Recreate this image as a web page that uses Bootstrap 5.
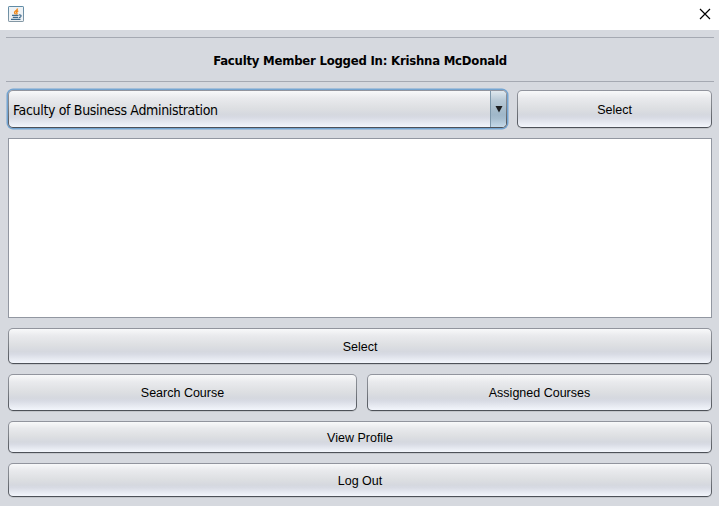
<!DOCTYPE html>
<html lang="en">
<head>
<meta charset="utf-8">
<meta name="viewport" content="width=device-width, initial-scale=1">
<title>Faculty Member</title>
<link href="https://cdn.jsdelivr.net/npm/bootstrap@5.3.0/dist/css/bootstrap.min.css" rel="stylesheet">
<style>
body{background:#d6d9df;font-family:"Liberation Sans",Arial,sans-serif;font-size:13px;color:#000;height:506px}
.title-strip{height:30px;background:#fff;padding:6px 8px 0}
.title-strip .close-x{margin:2px 0 0;width:12px;height:12px}
.user-strip{margin:7px 5px 0 6px;height:45px;border-top:1px solid #a5a9b2;border-bottom:1px solid #a5a9b2;font:bold 13px/43px "DejaVu Sans Condensed","DejaVu Sans",sans-serif;font-stretch:condensed;padding-top:1px}
.user-strip span{letter-spacing:-.22px;white-space:nowrap}
.main-area{padding:8px 7px 0 8px}
.nim{border:1px solid transparent;border-radius:5px;padding:3px 0 0;font-size:12.5px;line-height:15px;color:#000;
background:linear-gradient(#f8f9fa 0,#e9eaed 20%,#dddfe2 48%,#d5d8df 66%,#d8dbe4 74%,#f3f6fc 100%) padding-box,linear-gradient(#92959e,#81858b 40%,#4c5057) border-box;
box-shadow:0 1px 0 #c3c6cb}
.nim:hover,.nim:active{color:#000!important;border-color:transparent!important}
.combo{width:499px;height:38px;box-shadow:0 0 0 1.5px #73a4d1;font:14px/18px "DejaVu Sans Condensed","DejaVu Sans",sans-serif;font-stretch:condensed;padding:0;overflow:hidden}
.combo .combo-text{padding-left:4px;padding-top:1px;letter-spacing:-.34px;white-space:nowrap}
.combo .arrow-part{width:16px;border-left:1px solid #7c97ab;background:linear-gradient(#dfe8ee 0,#b9cad7 25%,#a8bdcc 50%,#9fb7c9 66%,#a6bdcf 76%,#c4d9e9 100%);border-radius:0 4px 4px 0}
.list-box{height:180px;background:#fff;border:1px solid #9297a1;margin-top:10px}
.h36{height:36px}.h37{height:37px;padding-top:2px}.h32{height:32px}.h34{height:34px}.h38{height:38px}
.w-search{width:349px}
.g10{gap:10px}
.actions{padding-top:10px}
</style>
</head>
<body>
<header class="title-strip d-flex justify-content-between align-items-start">
<svg width="16" height="16" viewBox="0 0 16 16" aria-hidden="true">
<defs><linearGradient id="jb" x2="0" y2="1"><stop stop-color="#5f8ba6"/><stop offset="1" stop-color="#8397a4"/></linearGradient></defs>
<rect x=".5" y=".5" width="15" height="15" rx=".6" fill="#eef2f5" stroke="url(#jb)"/>
<path d="M9.500 2.500Q9.500 4 7.500 5.200Q5.600 6.500 7.600 8.300M10.300 4.800Q7.800 5.800 8.900 7Q9.400 7.700 8.400 8.600" fill="none" stroke="#f08a1d" stroke-width="1.400"/>
<path d="M4 9.400H10.500M4.800 11.300H10M11 9Q13.600 8.700 13 10.200Q12.500 11.300 10.800 11.600M3 13.400H12.500" fill="none" stroke="#426c8d" stroke-width="1.200"/>
</svg>
<svg class="close-x" width="12" height="12" viewBox="0 0 12 12" role="img" aria-label="Close"><path d="M1 1L11 11M11 1L1 11" stroke="#000" stroke-width="1.200" fill="none"/></svg>
</header>
<div class="user-strip text-center"><span>Faculty Member Logged In: Krishna McDonald</span></div>
<main class="main-area">
<div class="d-flex g10">
<div class="nim combo d-flex align-items-stretch justify-content-between flex-shrink-0" role="combobox">
<span class="combo-text align-self-center">Faculty of Business Administration</span>
<span class="arrow-part d-flex align-items-center justify-content-center"><svg width="8" height="8" viewBox="0 0 8 8"><path d="M.5 1H7.500L4 7.500Z" fill="#1c1e20"/></svg></span>
</div>
<button class="btn nim h38 flex-grow-1">Select</button>
</div>
<div class="list-box"></div>
<div class="actions d-flex flex-column g10">
<button class="btn nim h36 w-100">Select</button>
<div class="d-flex g10">
<button class="btn nim h37 w-search">Search Course</button>
<button class="btn nim h37 flex-grow-1">Assigned Courses</button>
</div>
<button class="btn nim h32 w-100">View Profile</button>
<button class="btn nim h34 w-100">Log Out</button>
</div>
</main>
<script src="https://cdn.jsdelivr.net/npm/bootstrap@5.3.0/dist/js/bootstrap.bundle.min.js"></script>
</body>
</html>
